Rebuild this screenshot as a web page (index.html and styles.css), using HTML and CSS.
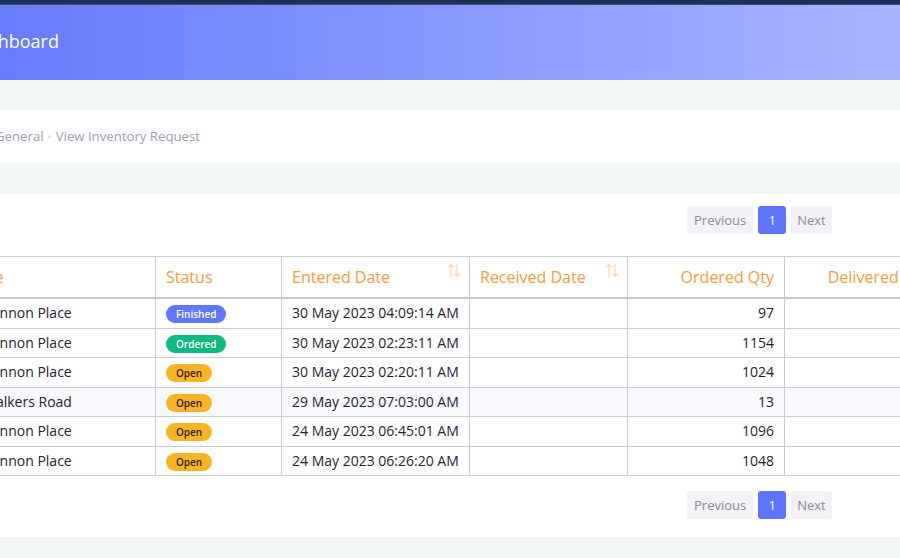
FILE: index.html
```html
<!DOCTYPE html>
<html>
<head>
<meta charset="utf-8">
<link rel="stylesheet" href="styles.css">
</head>
<body>
<div class="page">
  <div class="topbar"></div>
  <header class="hero">
    <h1 class="hero-title">Dashboard</h1>
  </header>
  <div class="spacer"></div>
  <nav class="crumbs">
    <span class="crumb">General</span>
    <span class="dot">•</span>
    <span class="crumb">View Inventory Request</span>
  </nav>
  <div class="spacer spacer-b"></div>
  <section class="card">
    <div class="pager">
      <button class="pg">Previous</button>
      <button class="pg active">1</button>
      <button class="pg pg-next">Next</button>
    </div>
    <table class="grid">
      <colgroup>
        <col class="c1"><col class="c2"><col class="c3"><col class="c4"><col class="c5"><col class="c6">
      </colgroup>
      <thead>
        <tr>
          <th>Site</th>
          <th>Status</th>
          <th class="sortable">Entered Date<svg class="sort" viewBox="0 0 14 15" width="14" height="15"><path d="M4 14V1.5M1 4.5L4 1.5L7 4.5M10 1V13.5M7 10.5L10 13.5L13 10.5" fill="none" stroke="currentColor" stroke-width="1.1"/></svg></th>
          <th class="sortable">Received Date<svg class="sort" viewBox="0 0 14 15" width="14" height="15"><path d="M4 14V1.5M1 4.5L4 1.5L7 4.5M10 1V13.5M7 10.5L10 13.5L13 10.5" fill="none" stroke="currentColor" stroke-width="1.1"/></svg></th>
          <th class="num">Ordered Qty</th>
          <th class="num">Delivered Qty</th>
        </tr>
      </thead>
      <tbody>
        <tr><td class="site">Cannon Place</td><td><span class="badge b-fin">Finished</span></td><td>30 May 2023 04:09:14 AM</td><td></td><td class="num">97</td><td></td></tr>
        <tr><td class="site">Cannon Place</td><td><span class="badge b-ord">Ordered</span></td><td>30 May 2023 02:23:11 AM</td><td></td><td class="num">1154</td><td></td></tr>
        <tr><td class="site">Cannon Place</td><td><span class="badge b-open">Open</span></td><td>30 May 2023 02:20:11 AM</td><td></td><td class="num">1024</td><td></td></tr>
        <tr class="hl"><td class="site">Walkers Road</td><td><span class="badge b-open">Open</span></td><td>29 May 2023 07:03:00 AM</td><td></td><td class="num">13</td><td></td></tr>
        <tr><td class="site">Cannon Place</td><td><span class="badge b-open">Open</span></td><td>24 May 2023 06:45:01 AM</td><td></td><td class="num">1096</td><td></td></tr>
        <tr><td class="site">Cannon Place</td><td><span class="badge b-open">Open</span></td><td>24 May 2023 06:26:20 AM</td><td></td><td class="num">1048</td><td></td></tr>
      </tbody>
    </table>
    <div class="pager pager-b">
      <button class="pg">Previous</button>
      <button class="pg active">1</button>
      <button class="pg pg-next">Next</button>
    </div>
  </section>
</div>
</body>
</html>
```
FILE: styles.css
```css
html, body {
  margin: 0;
  padding: 0;
  overflow: hidden;
  background: #f3f7f8;
  font-family: "Open Sans", "Liberation Sans", sans-serif;
}
.page {
  margin-left: -35px;
  width: 935px;
}
.topbar {
  height: 4px;
  background: #1b3157;
  border-bottom: 1px solid #3b4f72;
}
.hero {
  height: 75px;
  display: flex;
  align-items: center;
  padding-left: 1px;
  background: linear-gradient(to right, #6579fe 0%, #7f92ff 40%, #a9b5fe 100%);
}
.hero-title {
  margin: 0;
  font-size: 18px;
  font-weight: 400;
  color: #ffffff;
  line-height: 24px;
  padding-bottom: 3px;
}
.spacer {
  height: 30px;
}
.spacer-b {
  height: 31px;
}
.crumbs {
  height: 53px;
  background: #ffffff;
  display: flex;
  align-items: center;
  gap: 4px;
  padding-left: 30px;
  padding-bottom: 1px;
  box-sizing: border-box;
  font-size: 13.2px;
  color: #979fb5;
  width: 1100px;
}
.dot {
  color: #d4d6de;
  font-size: 11px;
}
.card {
  background: #ffffff;
  width: 1100px;
  height: 343px;
  padding-top: 12px;
  box-sizing: border-box;
}
.pager {
  display: flex;
  gap: 5px;
  padding-left: 722px;
}
.pager-b {
  margin-top: 15px;
}
.pg {
  height: 28px;
  border: none;
  border-radius: 3px;
  background: #f1f1f6;
  color: #8b8b96;
  font-family: "Open Sans", "Liberation Sans", sans-serif;
  font-size: 13px;
  padding: 0 7px;
  line-height: 28px;
}
.pg.active {
  background: #5d74fe;
  color: #ffffff;
  width: 28px;
  padding: 0;
}
.pg.pg-next {
  padding: 0 6px;
}
.grid {
  margin-top: 22px;
  border-collapse: collapse;
  table-layout: fixed;
  width: 974px;
  font-size: 14px;
  color: #1f2233;
}
.c1 { width: 190px; }
.c2 { width: 126px; }
.c3 { width: 188px; }
.c4 { width: 158px; }
.c5 { width: 157px; }
.c6 { width: 155px; }
.grid th {
  font-weight: 400;
  font-size: 16px;
  color: #f79b42;
  text-align: left;
  padding: 10px 10px 9px 10px;
  line-height: 21px;
  border: 1px solid #cccccc;
  border-bottom: 2px solid #c8c8c8;
  border-top: 1px solid #cccccc;
  position: relative;
  white-space: nowrap;
}
.grid td {
  padding: 4px 10px;
  line-height: 20.5px;
  border: 1px solid #cccccc;
  white-space: nowrap;
}
.grid td.site {
  padding-left: 17px;
}
.grid .num {
  text-align: right;
}
.hl td {
  background: #f7f9fc;
}
.sort {
  position: absolute;
  right: 8px;
  top: 6px;
  color: #fcd3ad;
}
.badge {
  display: inline-block;
  height: 18px;
  line-height: 18px;
  border-radius: 9px;
  font-size: 10px;
  font-weight: 600;
  padding: 0 10px;
  vertical-align: middle;
}
.b-fin {
  background: #6177fe;
  color: #ffffff;
}
.b-ord {
  background: #0fb981;
  color: #ffffff;
}
.b-open {
  background: #fbb326;
  color: #2a2410;
}
```
